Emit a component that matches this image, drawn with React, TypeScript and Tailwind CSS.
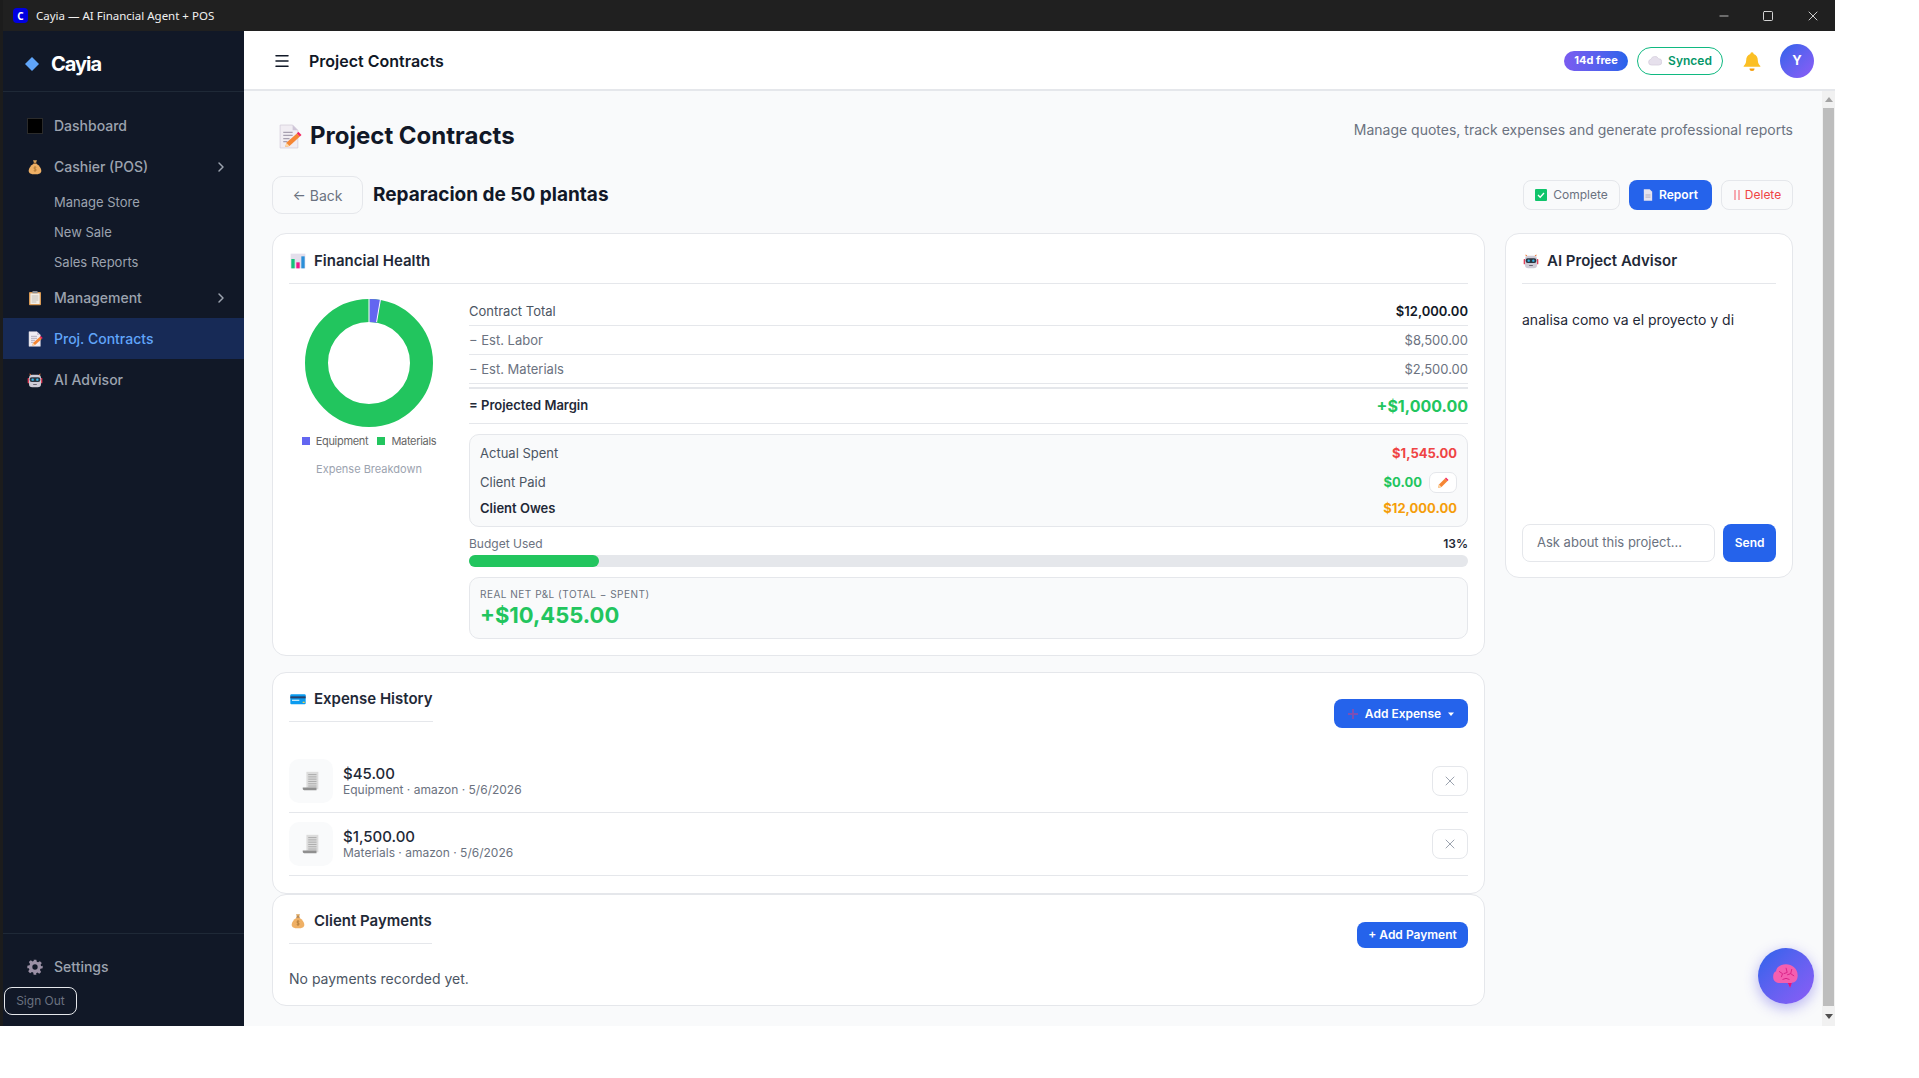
import { ChevronRight, Menu, Minus, Square, X } from "lucide-react";

const MemoIcon = ({ className }: { className?: string }) => (
  <svg viewBox="0 0 24 24" className={className}>
    <path d="M3 1h12l5 5v17H3z" fill="#f1edf3" stroke="#d6cfdc" strokeWidth="0.8" />
    <path d="M15 1v5h5z" fill="#cfc6d8" />
    <path d="M6 8h9M6 11h9M6 14h6M6 17h4" stroke="#a79fb0" strokeWidth="1.2" />
    <path d="M8 22l1-4L19 9l3 3-10 9z" fill="#f58634" />
    <path d="M19 9l1.5-1.5 3 3L22 12z" fill="#f4245e" />
    <path d="M8 22l1-4 3 3z" fill="#fcd9a8" />
  </svg>
);

const BagIcon = ({ className }: { className?: string }) => (
  <svg viewBox="0 0 24 24" className={className}>
    <path d="M9 2h6l-1.6 4h-2.8z" fill="#d8a25b" />
    <rect x="9.5" y="5.5" width="5" height="1.6" fill="#8c5b2c" />
    <path d="M10 7h4c5 3 7.500 7 7.500 10.500 0 3.500-3 5.500-9.500 5.500s-9.500-2-9.500-5.500C2.500 14 5 10 10 7z" fill="#efb065" />
    <path d="M14 12.500c-2-1-3.800-.3-3.800 1 0 2 3.800 1 3.800 3 0 1.300-2 1.800-3.900.9M12 11v8" fill="none" stroke="#a8712f" strokeWidth="1" />
  </svg>
);

const ClipboardIcon = ({ className }: { className?: string }) => (
  <svg viewBox="0 0 24 24" className={className}>
    <rect x="3" y="3" width="18" height="20" rx="1.500" fill="#d99a55" />
    <rect x="5" y="5" width="14" height="16" fill="#f3eee6" />
    <rect x="8" y="1.500" width="8" height="3.500" rx="1" fill="#8a8c90" />
    <path d="M7 9h10M7 12h10M7 15h10M7 18h7" stroke="#b8b2ac" strokeWidth="1.200" />
  </svg>
);

const RobotIcon = ({ className }: { className?: string }) => (
  <svg viewBox="0 0 24 24" className={className}>
    <path d="M4 2l3 3H4zM20 2l-3 3h3z" fill="#e8702d" />
    <rect x="1" y="9" width="3" height="8" rx="1" fill="#e0405a" />
    <rect x="20" y="9" width="3" height="8" rx="1" fill="#e0405a" />
    <rect x="3" y="4" width="18" height="19" rx="5" fill="#cfcbd6" />
    <rect x="4" y="8" width="16" height="7" rx="3" fill="#2c3540" />
    <circle cx="8.500" cy="11.500" r="1.800" fill="#39b7e8" />
    <circle cx="15.500" cy="11.500" r="1.800" fill="#39b7e8" />
    <rect x="9" y="18" width="6" height="1.500" rx="0.700" fill="#6b6672" />
  </svg>
);

const GearIcon = ({ className }: { className?: string }) => (
  <svg viewBox="0 0 24 24" className={className}>
    <path
      fill="#9b90a5"
      fillRule="evenodd"
      d="M10 1h4l.7 3.200 1.900.8 2.800-1.800 2.800 2.800-1.800 2.800.8 1.900L23.500 10v4l-3.300.7-.8 1.900 1.800 2.800-2.800 2.800-2.800-1.800-1.900.8L14 23.500h-4l-.7-3.300-1.900-.8-2.800 1.800-2.800-2.800 1.800-2.800-.8-1.900L.5 14v-4l3.300-.7.8-1.900-1.800-2.800 2.800-2.800 2.800 1.800 1.900-.8zM12 8a4 4 0 100 8 4 4 0 000-8z"
    />
  </svg>
);

const ChartIcon = ({ className }: { className?: string }) => (
  <svg viewBox="0 0 24 24" className={className}>
    <rect x="1" y="1" width="22" height="22" fill="#e4dfec" />
    <rect x="2" y="9" width="5" height="14" fill="#17c27c" />
    <rect x="9.500" y="14" width="5" height="9" fill="#f0178a" />
    <rect x="17" y="5" width="5" height="18" fill="#2b8fd8" />
  </svg>
);

const CardIcon = ({ className }: { className?: string }) => (
  <svg viewBox="0 0 24 24" className={className}>
    <rect x="0.500" y="5" width="23" height="15" rx="1.500" fill="#0a9bf0" />
    <rect x="0.500" y="8" width="23" height="3" fill="#27406b" />
    <rect x="3" y="13" width="11" height="2" fill="#bfe6fb" />
    <rect x="19" y="16" width="3" height="2" fill="#f5d547" />
  </svg>
);

const ReceiptIcon = ({ className }: { className?: string }) => (
  <svg viewBox="0 0 24 24" className={className}>
    <rect x="7" y="2" width="13" height="19" fill="#dcdcdc" />
    <path d="M9 5h9M9 7.500h9M9 10h9M9 12.500h9M9 15h9M9 17.500h9" stroke="#a6a6a6" strokeWidth="1" />
    <path d="M3 19h15v3H4.500A1.500 1.500 0 013 20.500z" fill="#8f8f8f" />
  </svg>
);

const PencilIcon = ({ className }: { className?: string }) => (
  <svg viewBox="0 0 24 24" className={className}>
    <path d="M2 22l2-7L16 3l5 5L9 20z" fill="#f58634" />
    <path d="M16 3l2-2 5 5-2 2z" fill="#f4245e" />
    <path d="M2 22l2-7 5 5z" fill="#fcd9a8" />
  </svg>
);

const BrainIcon = ({ className }: { className?: string }) => (
  <svg viewBox="0 0 24 24" className={className}>
    <path
      d="M12 2c5 0 10 3.500 10 9.500 0 3.800-2 6-5 6.200l-1.500 4-2-3.800H9c-4 .6-8-.8-8-4.900C1 9.500 2.500 8.500 3.500 8 3.500 4.500 7.500 2 12 2z"
      fill="#f45fb0"
    />
    <path
      d="M6 8l3 2-1 3M12 5l1 4-3 1M17 6l-1 4 3 2M9 15l3-1 3 1M16 10l-3 1"
      fill="none"
      stroke="#d81f84"
      strokeWidth="0.800"
    />
    <path d="M13.500 18h3.500l-1.500 4z" fill="#e3127c" />
  </svg>
);

const NavItem = ({ icon, label, active, chevron }: { icon: React.ReactNode; label: string; active?: boolean; chevron?: boolean }) => (
  <div className={`flex h-[41px] items-center pl-6 pr-[15px] text-[14px] font-medium ${active ? "bg-[#172a56] text-[#60a5fa]" : "text-[#9ca3af]"}`}>
    <span className="flex w-[27px] shrink-0 items-center">{icon}</span>
    <span className="flex-1">{label}</span>
    {chevron && <ChevronRight className="h-4 w-4 text-[#9ca3af]" strokeWidth={2.2} />}
  </div>
);

const SubItem = ({ label }: { label: string }) => (
  <div className="flex h-[30px] items-center pl-[51px] text-[13px] text-[#9ca3af]">{label}</div>
);

const Sidebar = () => (
  <aside className="flex w-[241px] shrink-0 flex-col bg-[#111827]">
    <div className="flex h-[61px] items-center gap-[13px] border-b border-[#1f2937] pl-[22px] pt-[6px]">
      <svg viewBox="0 0 14 14" className="h-[14px] w-[14px]">
        <path d="M7 0l7 7-7 7-7-7z" fill="#60a5fa" />
      </svg>
      <span className="ml-[-1px] text-[20px] font-bold tracking-[-1px] text-white">Cayia</span>
    </div>
    <nav className="flex flex-1 flex-col pt-[13px]">
      <NavItem label="Dashboard" icon={<span className="block h-4 w-4 border border-[#2b2b2b] bg-black" />} />
      <NavItem label="Cashier (POS)" chevron icon={<BagIcon className="h-4 w-4" />} />
      <div className="mb-[-1px] mt-[1px]">
        <SubItem label="Manage Store" />
        <SubItem label="New Sale" />
        <SubItem label="Sales Reports" />
      </div>
      <NavItem label="Management" chevron icon={<ClipboardIcon className="h-4 w-4" />} />
      <NavItem label="Proj. Contracts" active icon={<MemoIcon className="h-4 w-4" />} />
      <NavItem label="AI Advisor" icon={<RobotIcon className="h-4 w-4" />} />
    </nav>
    <div className="h-[93px] border-t border-[#1f2937] pt-[12px]">
      <NavItem label="Settings" icon={<GearIcon className="h-4 w-4" />} />
      <button className="ml-[1px] mt-0 h-[28px] w-[73px] rounded-lg border border-[#e5e7eb] text-[12px] text-[#6b7280]">Sign Out</button>
    </div>
  </aside>
);

const Header = () => (
  <header className="flex h-[60px] shrink-0 items-center border-b-2 border-[#e5e7eb] bg-white pl-[29px] pr-[21px] pt-[1px]">
    <Menu className="h-[18px] w-[18px] text-[#111827]" strokeWidth={2} />
    <span className="ml-[18px] flex-1 text-[16px] font-semibold text-[#111827]">Project Contracts</span>
    <span className="flex h-5 w-[64px] items-center justify-center rounded-full bg-gradient-to-r from-[#7a5cf0] to-[#2563eb] text-[11px] font-bold text-white">14d free</span>
    <span className="ml-[9px] flex h-7 w-[86px] items-center justify-center gap-[6px] rounded-full border border-[#10b981] text-[12px] font-semibold text-[#059669]">
      <svg viewBox="0 0 24 16" className="h-[10px] w-[14px]">
        <path d="M6 15a5 5 0 01-1-9.900A7 7 0 0118 4a5.500 5.500 0 01.500 11z" fill="#e6e0ec" stroke="#cfc8d8" strokeWidth="1" />
      </svg>
      Synced
    </span>
    <svg viewBox="0 0 24 24" className="ml-[19px] h-[20px] w-[20px]">
      <path d="M12 1.500a2 2 0 012 2c3.500 1 5 4 5 8 0 3 1.500 5 3 6.500v1H2v-1c1.500-1.500 3-3.500 3-6.500 0-4 1.500-7 5-8a2 2 0 012-2z" fill="#fbbf24" />
      <path d="M9 21h6a3 3 0 01-6 0z" fill="#f59e0b" />
    </svg>
    <span className="ml-[18px] flex h-[34px] w-[34px] items-center justify-center rounded-full bg-gradient-to-br from-[#2563eb] to-[#8b5cf6] text-[13px] font-bold text-white">Y</span>
  </header>
);

const Row = ({ label, value, labelClass, valueClass }: { label: string; value: string; labelClass: string; valueClass: string }) => (
  <div className="flex h-[29px] items-center justify-between border-b border-[#e5e7eb] pt-[1px] text-[13px]">
    <span className={labelClass}>{label}</span>
    <span className={valueClass}>{value}</span>
  </div>
);

const Donut = () => (
  <svg viewBox="0 0 128 128" className="h-[128px] w-[128px]">
    <circle cx="64" cy="64" r="52.500" fill="none" stroke="#22c55e" strokeWidth="23" />
    <path d="M64.300 11.500A52.500 52.500 0 0 1 73.800 12.400" fill="none" stroke="#6366f1" strokeWidth="23" />
    <path d="M64 0V23M75.500 0L71.600 23" stroke="#ffffff" strokeWidth="1" />
  </svg>
);

const CardTitle = ({ icon, label, fit }: { icon: React.ReactNode; label: string; fit?: boolean }) => (
  <div className={`flex h-[32px] items-start gap-[7px] border-b border-[#e5e7eb] text-[15px] font-semibold text-[#1f2937] ${fit ? "w-fit" : ""}`}>
    <span className="mt-[1px] flex w-[18px] justify-center">{icon}</span>
    <span className="leading-[18px]">{label}</span>
  </div>
);

const FinancialHealth = () => (
  <section className="h-[423px] rounded-[14px] border border-[#e5e7eb] bg-white px-[16px] pt-[18px]">
    <CardTitle label="Financial Health" icon={<ChartIcon className="h-4 w-4" />} />
    <div className="flex">
      <div className="flex w-[180px] shrink-0 flex-col items-center pr-[20px] pt-[15px]">
        <Donut />
        <div className="mt-[6px] flex items-center gap-[9px] text-[11px] tracking-[-0.3px] text-[#666666]">
          <span className="flex items-center gap-[6px]"><i className="h-2 w-2 bg-[#6366f1]" />Equipment</span>
          <span className="flex items-center gap-[6px]"><i className="h-2 w-2 bg-[#22c55e]" />Materials</span>
        </div>
        <div className="mt-[11px] text-[11px] text-[#9ca3af]">Expense Breakdown</div>
      </div>
      <div className="min-w-0 flex-1 pt-[13px]">
        <Row label="Contract Total" value="$12,000.00" labelClass="text-[#4b5563]" valueClass="font-semibold text-[#111827]" />
        <Row label="− Est. Labor" value="$8,500.00" labelClass="text-[#6b7280]" valueClass="text-[#6b7280]" />
        <Row label="− Est. Materials" value="$2,500.00" labelClass="text-[#6b7280]" valueClass="text-[#6b7280]" />
        <div className="mt-[3px] flex h-[37px] items-center justify-between border-y border-[#e5e7eb] border-t-2 text-[13px]">
          <span className="font-semibold text-[#1f2937]">= Projected Margin</span>
          <span className="text-[16px] font-bold text-[#22c55e]">+$1,000.00</span>
        </div>
        <div className="mt-[10px] h-[93px] rounded-[10px] border border-[#e5e7eb] bg-[#f9fafb] px-[10px] pt-[4px] text-[13px]">
          <div className="flex h-[29px] items-center justify-between">
            <span className="text-[#4b5563]">Actual Spent</span>
            <span className="font-bold text-[#ef4444]">$1,545.00</span>
          </div>
          <div className="flex h-[29px] items-center justify-between">
            <span className="text-[#4b5563]">Client Paid</span>
            <span className="flex items-center gap-[7px] font-bold text-[#22c55e]">
              $0.00
              <span className="flex h-[21px] w-[28px] items-center justify-center rounded-[7px] border border-[#e5e7eb] bg-white">
                <PencilIcon className="h-3 w-3" />
              </span>
            </span>
          </div>
          <div className="flex h-[23px] items-center justify-between">
            <span className="font-semibold text-[#1f2937]">Client Owes</span>
            <span className="font-bold text-[#f59e0b]">$12,000.00</span>
          </div>
        </div>
        <div className="mt-[9px] flex h-[16px] items-center justify-between text-[12px]">
          <span className="text-[#6b7280]">Budget Used</span>
          <span className="font-semibold text-[#1f2937]">13%</span>
        </div>
        <div className="mt-[3px] h-3 rounded-full bg-[#e5e7eb]">
          <div className="h-3 w-[13%] rounded-full bg-[#22c55e]" />
        </div>
        <div className="mt-[10px] h-[62px] rounded-[10px] border border-[#e5e7eb] bg-[#f9fafb] px-[10px] pt-[9px]">
          <div className="text-[10px] leading-[14px] tracking-[0.5px] text-[#6b7280]">REAL NET P&amp;L (TOTAL − SPENT)</div>
          <div className="text-[22px] font-bold leading-[28px] text-[#22c55e]">+$10,455.00</div>
        </div>
      </div>
    </div>
  </section>
);

const ExpenseRow = ({ amount, meta }: { amount: string; meta: string }) => (
  <div className="flex h-[63px] items-center border-b border-[#e5e7eb] py-[9px]">
    <span className="flex h-[44px] w-[44px] items-center justify-center rounded-[10px] bg-[#f9fafb]">
      <ReceiptIcon className="h-[22px] w-[22px]" />
    </span>
    <div className="ml-[10px] flex-1">
      <div className="text-[15px] font-medium leading-[17px] text-[#1f2937]">{amount}</div>
      <div className="text-[12px] leading-[15px] text-[#6b7280]">{meta}</div>
    </div>
    <span className="flex h-[30px] w-[36px] items-center justify-center rounded-lg border border-[#e5e7eb] bg-white">
      <X className="h-4 w-4 text-[#9ca3af]" strokeWidth={1.500} />
    </span>
  </div>
);

const ExpenseHistory = () => (
  <section className="mt-[16px] h-[222px] rounded-[14px] border border-[#e5e7eb] bg-white px-[16px] pt-[17px]">
    <div className="flex items-start justify-between">
      <CardTitle fit label="Expense History" icon={<CardIcon className="h-4 w-4" />} />
      <button className="mt-[9px] flex h-[29px] w-[134px] items-center justify-center gap-[6px] rounded-lg bg-[#2563eb] text-[12px] font-semibold text-white">
        <svg viewBox="0 0 12 12" className="h-3 w-3"><path d="M6 1v10M1 6h10" stroke="#7c4fb5" strokeWidth="2" /></svg>
        Add Expense
        <svg viewBox="0 0 8 8" className="h-2 w-2"><path d="M1 2.500h6L4 6z" fill="#ffffff" /></svg>
      </button>
    </div>
    <div className="mt-[22px]">
      <ExpenseRow amount="$45.00" meta="Equipment · amazon · 5/6/2026" />
      <ExpenseRow amount="$1,500.00" meta="Materials · amazon · 5/6/2026" />
    </div>
  </section>
);

const ClientPayments = () => (
  <section className="h-[112px] rounded-[14px] border border-[#e5e7eb] bg-white px-[16px] pt-[17px]">
    <div className="flex items-start justify-between">
      <CardTitle fit label="Client Payments" icon={<BagIcon className="h-4 w-4" />} />
      <button className="mt-[10px] h-[26px] w-[111px] rounded-lg bg-[#2563eb] text-[12px] font-semibold text-white">+ Add Payment</button>
    </div>
    <p className="mt-[20px] text-[14px] text-[#4b5563]">No payments recorded yet.</p>
  </section>
);

const AdvisorCard = () => (
  <section className="flex h-[345px] w-[288px] shrink-0 flex-col rounded-[14px] border border-[#e5e7eb] bg-white px-[16px] pt-[18px]">
    <CardTitle label="AI Project Advisor" icon={<RobotIcon className="h-4 w-4" />} />
    <p className="mt-[25px] flex-1 text-[14px] text-[#1f2937]">analisa como va el proyecto y di</p>
    <div className="mb-[15px] flex gap-2">
      <div className="flex h-[38px] w-[194px] items-center rounded-lg border border-[#e5e7eb] bg-white pl-[14px] text-[13px] text-[#6b7280]">Ask about this project...</div>
      <button className="h-[38px] w-[53px] rounded-lg bg-[#2563eb] text-[12px] font-semibold text-white">Send</button>
    </div>
  </section>
);

const Content = () => (
  <main className="relative min-w-0 flex-1 overflow-hidden bg-[#f9fafb] pl-[28px] pr-[29px] pt-[26px]">
    <div className="flex h-[38px] items-center justify-between">
      <h1 className="flex items-center gap-2 text-[24px] font-bold text-[#111827]">
        <MemoIcon className="ml-[5px] h-[25px] w-[25px]" />
        Project Contracts
      </h1>
      <p className="mb-[13px] text-[14px] text-[#6b7280]">Manage quotes, track expenses and generate professional reports</p>
    </div>
    <div className="mt-[21px] flex h-[38px] items-center">
      <button className="h-[38px] w-[91px] rounded-[10px] border border-[#e5e7eb] bg-[#f9fafb] text-[14px] text-[#6b7280]">← Back</button>
      <h2 className="ml-[10px] flex-1 text-[19px] font-bold text-[#111827]">Reparacion de 50 plantas</h2>
      <div className="flex items-center gap-[9px] text-[12px]">
        <button className="flex h-[30px] w-[97px] items-center justify-center gap-[6px] rounded-lg border border-[#e5e7eb] text-[#6b7280]">
          <svg viewBox="0 0 12 12" className="h-3 w-3">
            <rect width="12" height="12" rx="1" fill="#10c46b" />
            <path d="M3 6l2.200 2.200L9 4" fill="none" stroke="#ffffff" strokeWidth="1.300" />
          </svg>
          Complete
        </button>
        <button className="flex h-[30px] w-[83px] items-center justify-center gap-[6px] rounded-lg bg-[#2563eb] font-semibold text-white">
          <svg viewBox="0 0 12 14" className="h-3 w-[10px]">
            <path d="M1 0h7l3 3v11H1z" fill="#e6e3ee" />
            <path d="M3 7h6M3 9.500h6" stroke="#a9a5b5" strokeWidth="1" />
          </svg>
          Report
        </button>
        <button className="flex h-[30px] w-[72px] items-center justify-center gap-[4px] rounded-lg border border-[#e5e7eb] text-[#ef4444]">
          <svg viewBox="0 0 8 12" className="h-3 w-2">
            <path d="M2 1v10M6 1v10" stroke="#f7a8b0" strokeWidth="2" />
          </svg>
          Delete
        </button>
      </div>
    </div>
    <div className="mt-[19px] flex items-start gap-[20px]">
      <div className="min-w-0 flex-1">
        <FinancialHealth />
        <ExpenseHistory />
        <ClientPayments />
      </div>
      <AdvisorCard />
    </div>
    <button className="absolute bottom-[22px] right-[8px] flex h-[56px] w-[56px] items-center justify-center rounded-full bg-gradient-to-br from-[#2563eb] to-[#8b5cf6] shadow-[0_4px_14px_rgba(79,70,229,0.4)]">
      <BrainIcon className="h-[28px] w-[28px]" />
    </button>
  </main>
);

const Scrollbar = () => (
  <div className="flex w-[13px] shrink-0 flex-col bg-[#f1f1f1]">
    <div className="flex h-[17px] items-center justify-center">
      <svg viewBox="0 0 8 5" className="h-[5px] w-2"><path d="M4 0l4 5H0z" fill="#a3a3a3" /></svg>
    </div>
    <div className="mx-[1px] flex-1 bg-[#bdbdbd]" />
    <div className="flex h-[20px] items-center justify-center">
      <svg viewBox="0 0 8 5" className="h-[5px] w-2"><path d="M0 0h8L4 5z" fill="#505050" /></svg>
    </div>
  </div>
);

export default function App() {
  return (
    <div className="h-[1078px] w-[1919px] overflow-hidden bg-white font-['Inter',sans-serif]">
      <div className="flex h-[1026px] w-[1835px] flex-col border-l-[3px] border-[#1c1c1c] bg-[#111827]">
        <div className="flex h-[31px] shrink-0 items-center bg-[#202020] pl-[10px] font-['Noto_Sans',sans-serif] text-[11.500px] text-[#f0f0f0]">
          <span className="flex h-[15px] w-[15px] items-center justify-center rounded-[4px] bg-[#0000e0] text-[10px] font-bold leading-none text-white">C</span>
          <span className="ml-[8px] flex-1">Cayia — AI Financial Agent + POS</span>
          <div className="flex items-center gap-[31px] pr-[14px] text-[#e8e8e8]">
            <Minus className="h-[14px] w-[14px]" strokeWidth={1.300} />
            <Square className="h-[12px] w-[12px]" strokeWidth={1.800} />
            <X className="h-[16px] w-[16px]" strokeWidth={1.300} />
          </div>
        </div>
        <div className="flex min-h-0 flex-1">
          <Sidebar />
          <div className="flex min-w-0 flex-1 flex-col">
            <Header />
            <div className="flex min-h-0 flex-1">
              <Content />
              <Scrollbar />
            </div>
          </div>
        </div>
      </div>
    </div>
  );
}
